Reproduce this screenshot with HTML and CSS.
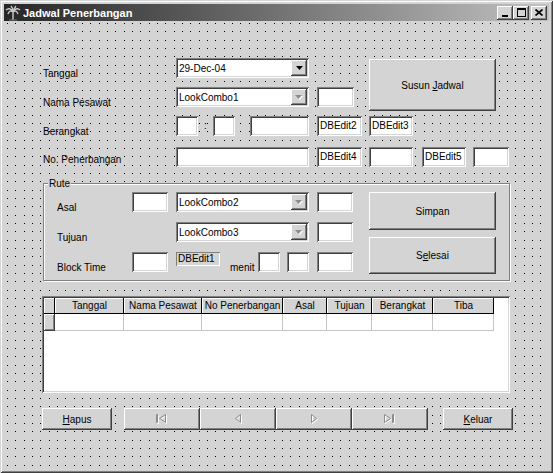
FILE: index.html
```html
<!DOCTYPE html>
<html lang="id">
<head>
    <meta charset="UTF-8">
    <title>Jadwal Penerbangan</title>
    <link rel="stylesheet" href="styles.css">
</head>
<body>

    <div class="window">

        <!-- Title bar -->
        <div class="titlebar">
            <svg class="app-icon" width="16" height="16" viewBox="0 0 16 16">
                <path d="M8 15V7" stroke="#9a9a9a" stroke-width="2"/>
                <path d="M8 7C6 3 3 3 1 5M8 7C10 3 13 3 15 5M8 7C6 5 4 6 3 9M8 7C10 5 12 6 13 9M8 7C8 4 7 2 6 1M8 7C9 4 10 2 11 1" stroke="#c8c8c8" stroke-width="1.4" fill="none"/>
                <path d="M4 15h8" stroke="#777" stroke-width="1"/>
            </svg>
            <span class="caption">Jadwal Penerbangan</span>
            <div class="caption-btns">
                <span class="cbtn"><svg width="8" height="8" viewBox="0 0 8 8"><rect x="1" y="6" width="6" height="2" fill="#000"/></svg></span>
                <span class="cbtn"><svg width="9" height="9" viewBox="0 0 9 9"><rect x="0.5" y="0.5" width="8" height="8" fill="none" stroke="#000"/><rect x="0" y="0" width="9" height="2" fill="#000"/></svg></span>
                <span class="cbtn close"><svg width="8" height="7" viewBox="0 0 8 7"><path d="M0.5 0.5l7 6M7.5 0.5l-7 6" stroke="#000" stroke-width="1.7"/></svg></span>
            </div>
        </div>

        <!-- Form client area -->
        <div class="client">

            <div class="top">
                <div class="top-rows">
                    <div class="row">
                        <span class="lbl">Tanggal</span>
                        <div class="combo w133">
                            <span class="combo-text">29-Dec-04</span>
                            <span class="drop"><svg width="7" height="4" viewBox="0 0 7 4"><path d="M0 0h7L3.5 4z" fill="#000"/></svg></span>
                        </div>
                    </div>
                    <div class="row row-nama">
                        <span class="lbl">Nama Pesawat</span>
                        <div class="combo w133">
                            <span class="combo-text">LookCombo1</span>
                            <span class="drop"><svg width="8" height="5" viewBox="0 0 8 5"><path d="M1 1h7L4.5 5z" fill="#fff"/><path d="M0 0h7L3.5 4z" fill="#8c8c8c"/></svg></span>
                        </div>
                        <div class="edit w37 ml8"></div>
                    </div>
                </div>
                <button class="btn btn-susun"><span>Susun <u>J</u>adwal</span></button>
            </div>

            <div class="row row-berangkat">
                <span class="lbl">Berangkat</span>
                <div class="edit w22"></div>
                <span class="colon">:</span>
                <div class="edit w22"></div>
                <div class="edit w59 ml15"></div>
                <div class="edit w45 ml8">DBEdit2</div>
                <div class="edit w44 ml7">DBEdit3</div>
            </div>

            <div class="row row-nomor">
                <span class="lbl lbl-nomor">No. Penerbangan</span>
                <div class="edit w133"></div>
                <div class="edit w45 ml8">DBEdit4</div>
                <div class="edit w44 ml7"></div>
                <div class="edit w44 ml9">DBEdit5</div>
                <div class="edit w36 ml7"></div>
            </div>

            <!-- Rute group box -->
            <div class="group">
                <span class="group-title">Rute</span>
                <div class="group-rows">
                    <div class="grow">
                        <span class="glbl">Asal</span>
                        <div class="edit w36"></div>
                        <div class="combo w133 ml8">
                            <span class="combo-text">LookCombo2</span>
                            <span class="drop"><svg width="8" height="5" viewBox="0 0 8 5"><path d="M1 1h7L4.5 5z" fill="#fff"/><path d="M0 0h7L3.5 4z" fill="#8c8c8c"/></svg></span>
                        </div>
                        <div class="edit w36 ml8"></div>
                    </div>
                    <div class="grow">
                        <span class="glbl">Tujuan</span>
                        <div class="combo w133 ml44">
                            <span class="combo-text">LookCombo3</span>
                            <span class="drop"><svg width="8" height="5" viewBox="0 0 8 5"><path d="M1 1h7L4.5 5z" fill="#fff"/><path d="M0 0h7L3.5 4z" fill="#8c8c8c"/></svg></span>
                        </div>
                        <div class="edit w36 ml8"></div>
                    </div>
                    <div class="grow">
                        <span class="glbl">Block Time</span>
                        <div class="edit w36"></div>
                        <div class="dbtext ml8">DBEdit1</div>
                        <span class="menit">menit</span>
                        <div class="edit w22"></div>
                        <div class="edit w22 ml7"></div>
                        <div class="edit w36 ml8"></div>
                    </div>
                </div>
                <div class="group-btns">
                    <button class="btn btn-simpan"><span>Simpan</span></button>
                    <button class="btn btn-selesai"><span>S<u>e</u>lesai</span></button>
                </div>
            </div>

            <!-- Data grid -->
            <div class="grid">
                <div class="grid-head">
                    <span class="hcell c-ind"></span>
                    <span class="hcell c-tgl">Tanggal</span>
                    <span class="hcell c-nama">Nama Pesawat</span>
                    <span class="hcell c-no">No Penerbangan</span>
                    <span class="hcell c-asal">Asal</span>
                    <span class="hcell c-tujuan">Tujuan</span>
                    <span class="hcell c-brk">Berangkat</span>
                    <span class="hcell c-tiba">Tiba</span>
                </div>
                <div class="grid-row">
                    <span class="hcell c-ind"></span>
                    <span class="dcell c-tgl"></span>
                    <span class="dcell c-nama"></span>
                    <span class="dcell c-no"></span>
                    <span class="dcell c-asal"></span>
                    <span class="dcell c-tujuan"></span>
                    <span class="dcell c-brk"></span>
                    <span class="dcell c-tiba"></span>
                </div>
            </div>

            <!-- Bottom buttons -->
            <div class="bottom">
                <button class="btn btn-hapus"><span><u>H</u>apus</span></button>
                <div class="nav">
                    <button class="btn nav-btn">
                        <svg width="12" height="11" viewBox="0 0 12 11">
                            <g fill="none" stroke="#fff" transform="translate(1,1)"><path d="M0.5 0.5v8h1v-8z"/><path d="M9.5 0.5L3.5 4.5L9.5 8.5z"/></g>
                            <g fill="none" stroke="#8c8c8c"><path d="M0.5 0.5v8h1v-8z"/><path d="M9.5 0.5L3.5 4.5L9.5 8.5z"/></g>
                        </svg>
                    </button>
                    <button class="btn nav-btn">
                        <svg width="9" height="11" viewBox="0 0 9 11">
                            <path d="M7.5 1.5L2.5 5.5L7.5 9.5z" fill="none" stroke="#fff"/>
                            <path d="M6.5 0.5L1.5 4.5L6.5 8.5z" fill="none" stroke="#8c8c8c"/>
                        </svg>
                    </button>
                    <button class="btn nav-btn">
                        <svg width="9" height="11" viewBox="0 0 9 11">
                            <path d="M2.5 1.5L7.5 5.5L2.5 9.5z" fill="none" stroke="#fff"/>
                            <path d="M1.5 0.5L6.5 4.5L1.5 8.5z" fill="none" stroke="#8c8c8c"/>
                        </svg>
                    </button>
                    <button class="btn nav-btn">
                        <svg width="12" height="11" viewBox="0 0 12 11">
                            <g fill="none" stroke="#fff" transform="translate(1,1)"><path d="M8.5 0.5v8h1v-8z"/><path d="M0.5 0.5L6.5 4.5L0.5 8.5z"/></g>
                            <g fill="none" stroke="#8c8c8c"><path d="M8.5 0.5v8h1v-8z"/><path d="M0.5 0.5L6.5 4.5L0.5 8.5z"/></g>
                        </svg>
                    </button>
                </div>
                <button class="btn btn-keluar"><span><u>K</u>eluar</span></button>
            </div>

        </div>
    </div>

</body>
</html>
```

FILE: styles.css
```css
* {
    box-sizing: border-box;
}
body {
    margin: 0;
    background-color: #d4d4d4;
    font-family: "Liberation Sans", Arial, sans-serif;
    font-size: 10px;
    color: #000;
}

/* Window frame */
.window {
    width: 553px;
    height: 473px;
    padding: 4px;
    background-color: #d4d4d4;
    box-shadow: inset 1px 1px #d4d4d4, inset -1px -1px #404040, inset 2px 2px #fff, inset -2px -2px #808080;
    display: flex;
    flex-direction: column;
}
.titlebar {
    height: 17px;
    flex-shrink: 0;
    display: flex;
    align-items: center;
    padding: 0 2px 0 1px;
    background: linear-gradient(to right, #262626, #5a5a5a 35%, #c2c2c2);
    color: #fff;
}
.app-icon {
    display: block;
    margin-right: 2px;
}
.caption {
    font-weight: bold;
    font-size: 11px;
}
.caption-btns {
    margin-left: auto;
    display: flex;
}
.cbtn {
    width: 16px;
    height: 14px;
    background-color: #d4d4d4;
    box-shadow: inset -1px -1px #404040, inset 1px 1px #fff, inset -2px -2px #808080;
    display: flex;
    align-items: center;
    justify-content: center;
}
.cbtn svg {
    display: block;
}
.cbtn.close {
    margin-left: 2px;
}

/* Client area with designer dot grid */
.client {
    flex: 1;
    position: relative;
    z-index: 0;
    padding: 37px 0 0 39px;
}
.client::before {
    content: "";
    position: absolute;
    top: 0;
    left: 0;
    right: 0;
    bottom: 0;
    z-index: -1;
    background-image: linear-gradient(to right, #000 0 1px, transparent 1px 8px, #000 8px 9px, transparent 9px 17px, #000 17px 18px, transparent 18px);
    background-size: 25px 100%;
    background-position: 3px 0;
    -webkit-mask-image: linear-gradient(to bottom, #000 0 1px, transparent 1px 8px, #000 8px 9px, transparent 9px 17px, #000 17px 18px, transparent 18px);
    -webkit-mask-size: 100% 25px;
    -webkit-mask-position: 0 2px;
    mask-image: linear-gradient(to bottom, #000 0 1px, transparent 1px 8px, #000 8px 9px, transparent 9px 17px, #000 17px 18px, transparent 18px);
    mask-size: 100% 25px;
    mask-position: 0 2px;
}

/* Rows */
.top {
    display: flex;
    align-items: flex-start;
}
.row {
    display: flex;
    align-items: flex-start;
    height: 20px;
}
.row-nama {
    margin-top: 9px;
}
.row-berangkat {
    margin-top: 5px;
}
.row-nomor {
    margin-top: 11px;
}
.lbl {
    width: 133px;
    line-height: 13px;
    margin-top: 9px;
}
.lbl-nomor {
    margin-top: 6px;
}
.colon {
    width: 15px;
    text-align: center;
    line-height: 20px;
}

/* Controls */
.edit {
    height: 20px;
    background-color: #fff;
    box-shadow: inset 1px 1px #808080, inset -1px -1px #fff, inset 2px 2px #404040, inset -2px -2px #d4d4d4;
    padding-left: 3px;
    line-height: 20px;
    white-space: nowrap;
    overflow: hidden;
}
.combo {
    height: 20px;
    background-color: #fff;
    box-shadow: inset 1px 1px #808080, inset -1px -1px #fff, inset 2px 2px #404040, inset -2px -2px #d4d4d4;
    padding: 2px 2px 2px 3px;
    display: flex;
    align-items: center;
}
.combo-text {
    flex: 1;
    white-space: nowrap;
}
.drop {
    width: 16px;
    height: 16px;
    background-color: #d4d4d4;
    box-shadow: inset -1px -1px #404040, inset 1px 1px #fff, inset -2px -2px #808080;
    display: flex;
    align-items: center;
    justify-content: center;
}
.drop svg {
    display: block;
}
.dbtext {
    width: 44px;
    height: 14px;
    line-height: 13px;
    padding-left: 2px;
    box-shadow: inset 1px 1px #808080, inset -1px -1px #fff;
}
.menit {
    width: 28px;
    margin-left: 10px;
    line-height: 13px;
    margin-top: 9px;
}

.w22 { width: 22px; }
.w36 { width: 36px; }
.w37 { width: 37px; }
.w44 { width: 44px; }
.w45 { width: 45px; }
.w59 { width: 59px; }
.w133 { width: 133px; }
.ml7 { margin-left: 7px; }
.ml8 { margin-left: 8px; }
.ml9 { margin-left: 9px; }
.ml15 { margin-left: 15px; }
.ml44 { margin-left: 44px; }

/* Buttons */
.btn {
    border: 0;
    padding: 0;
    background-color: #d4d4d4;
    font: inherit;
    color: #000;
    box-shadow: inset -1px -1px #404040, inset 1px 1px #fff, inset -2px -2px #808080;
    display: flex;
    align-items: center;
    justify-content: center;
}
.btn-susun {
    width: 127px;
    height: 52px;
    margin: 1px 0 0 15px;
}

/* Group box */
.group {
    position: relative;
    margin-top: 16px;
    width: 467px;
    height: 98px;
    border: 1px solid #808080;
    box-shadow: inset 1px 1px #fff, 1px 1px #fff;
    background-color: #d4d4d4;
    padding: 8px 0 0 13px;
    display: flex;
    align-items: flex-start;
}
.group-title {
    position: absolute;
    top: -6px;
    left: 4px;
    padding: 0 1px;
    line-height: 12px;
    background-color: #d4d4d4;
}
.grow {
    display: flex;
    align-items: flex-start;
    height: 20px;
}
.grow + .grow {
    margin-top: 10px;
}
.glbl {
    width: 75px;
    line-height: 13px;
    margin-top: 9px;
}
.group-btns {
    margin-left: 16px;
    display: flex;
    flex-direction: column;
}
.btn-simpan {
    width: 127px;
    height: 38px;
}
.btn-selesai {
    width: 127px;
    height: 37px;
    margin-top: 7px;
}

/* Grid */
.grid {
    margin: 15px 0 0 -1px;
    width: 468px;
    height: 97px;
    padding: 2px;
    background-color: #fff;
    box-shadow: inset 1px 1px #808080, inset -1px -1px #fff, inset 2px 2px #404040, inset -2px -2px #d4d4d4;
}
.grid-head,
.grid-row {
    display: flex;
}
.hcell {
    height: 16px;
    line-height: 16px;
    text-align: center;
    white-space: nowrap;
    overflow: hidden;
    background-color: #d4d4d4;
    box-shadow: inset -1px -1px #000, inset 1px 1px #fff;
}
.grid-row .hcell {
    height: 17px;
    box-shadow: inset -1px -1px #404040, inset 1px 1px #fff, inset -2px -2px #808080;
}
.dcell {
    height: 17px;
    border-right: 1px solid #c4c4c4;
    border-bottom: 1px solid #c4c4c4;
}
.c-ind { width: 11px; }
.c-tgl { width: 69px; }
.c-nama { width: 78px; }
.c-no { width: 81px; }
.c-asal { width: 44px; }
.c-tujuan { width: 45px; }
.c-brk { width: 61px; }
.c-tiba { width: 61px; }

/* Bottom bar */
.bottom {
    display: flex;
    margin: 15px 0 0 -1px;
}
.btn-hapus,
.btn-keluar {
    width: 70px;
    height: 22px;
}
.nav {
    display: flex;
    margin-left: 12px;
}
.nav-btn {
    width: 76px;
    height: 22px;
}
.btn-keluar {
    margin-left: 15px;
}
```
